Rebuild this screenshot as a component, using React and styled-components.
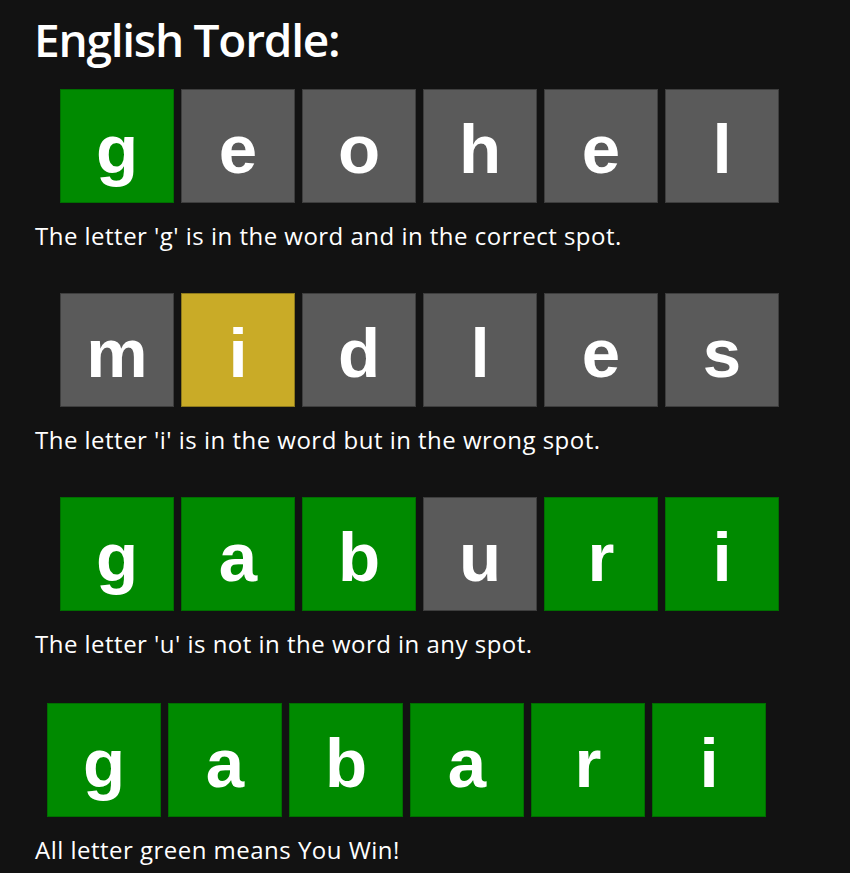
import React from "react";
import styled, { createGlobalStyle } from "styled-components";

const Global = createGlobalStyle`
  html, body {
    margin: 0;
    padding: 0;
    background: #121212;
  }
  body {
    font-family: "Open Sans", "Noto Sans", sans-serif;
    color: #ffffff;
  }
`;

const Page = styled.main`
  min-height: 873px;
  box-sizing: border-box;
  padding: 11px 35px 0 35px;
  background: #121212;
`;

const Title = styled.h1`
  margin: 0 0 0 -1px;
  font-size: 46px;
  line-height: 56px;
  font-weight: 600;
  letter-spacing: -1.25px;
  color: #ffffff;
`;

const Section = styled.section`
  display: flex;
  flex-direction: column;
  margin-top: ${(p) => p.$top}px;
`;

const TileRow = styled.div`
  display: flex;
  gap: 7px;
  padding-left: ${(p) => p.$indent}px;
`;

const palette = {
  correct: { bg: "#008a00", border: "#006e00" },
  present: { bg: "#c9ab27", border: "#8e7a1c" },
  absent: { bg: "#5a5a5a", border: "#3e3e3e" },
};

const Tile = styled.div`
  width: 114px;
  height: 114px;
  box-sizing: border-box;
  padding-top: 6px;
  display: flex;
  align-items: center;
  justify-content: center;
  background: ${(p) => palette[p.$state].bg};
  border: 1px solid ${(p) => palette[p.$state].border};
  font-family: "Liberation Sans", Arial, sans-serif;
  font-weight: 700;
  font-size: 69px;
  color: #ffffff;
`;

const Caption = styled.p`
  margin: 17px 0 0 0;
  font-size: 24px;
  line-height: 32px;
  letter-spacing: 0.48px;
  color: #ffffff;
`;

const rows = [
  {
    top: 22,
    indent: 25,
    tiles: [
      ["g", "correct"],
      ["e", "absent"],
      ["o", "absent"],
      ["h", "absent"],
      ["e", "absent"],
      ["l", "absent"],
    ],
    text: "The letter 'g' is in the word and in the correct spot.",
  },
  {
    top: 41,
    indent: 25,
    tiles: [
      ["m", "absent"],
      ["i", "present"],
      ["d", "absent"],
      ["l", "absent"],
      ["e", "absent"],
      ["s", "absent"],
    ],
    text: "The letter 'i' is in the word but in the wrong spot.",
  },
  {
    top: 41,
    indent: 25,
    tiles: [
      ["g", "correct"],
      ["a", "correct"],
      ["b", "correct"],
      ["u", "absent"],
      ["r", "correct"],
      ["i", "correct"],
    ],
    text: "The letter 'u' is not in the word in any spot.",
  },
  {
    top: 43,
    indent: 12,
    tiles: [
      ["g", "correct"],
      ["a", "correct"],
      ["b", "correct"],
      ["a", "correct"],
      ["r", "correct"],
      ["i", "correct"],
    ],
    text: "All letter green means You Win!",
  },
];

export default function App() {
  return (
    <>
      <Global />
      <Page>
        <Title>English Tordle:</Title>
        {rows.map((row, i) => (
          <Section key={i} $top={row.top}>
            <TileRow $indent={row.indent}>
              {row.tiles.map(([ch, st], j) => (
                <Tile key={j} $state={st}>
                  {ch}
                </Tile>
              ))}
            </TileRow>
            <Caption>{row.text}</Caption>
          </Section>
        ))}
      </Page>
    </>
  );
}
